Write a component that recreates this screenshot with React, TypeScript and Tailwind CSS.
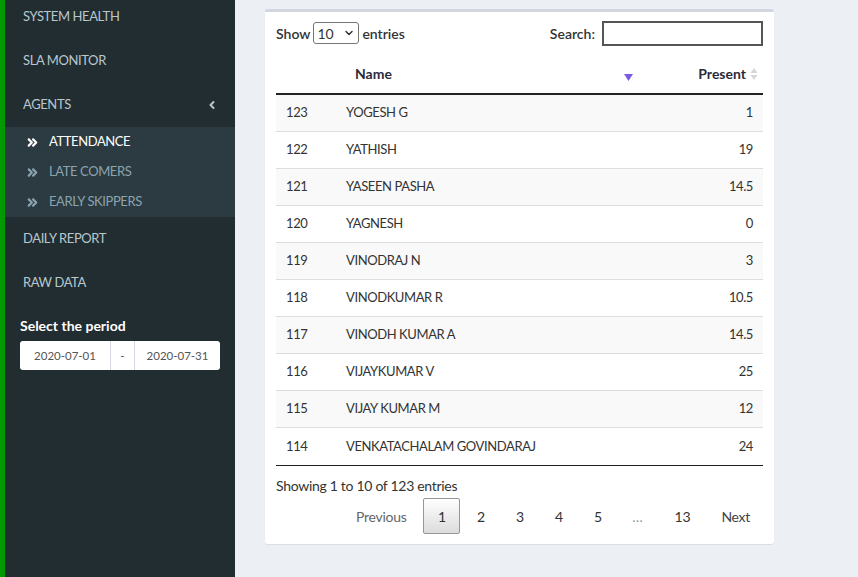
import React from "react";
import { ChevronLeft, ChevronsRight, ChevronDown } from "lucide-react";

const rows = [
  { id: 123, name: "YOGESH G", present: "1" },
  { id: 122, name: "YATHISH", present: "19" },
  { id: 121, name: "YASEEN PASHA", present: "14.5" },
  { id: 120, name: "YAGNESH", present: "0" },
  { id: 119, name: "VINODRAJ N", present: "3" },
  { id: 118, name: "VINODKUMAR R", present: "10.5" },
  { id: 117, name: "VINODH KUMAR A", present: "14.5" },
  { id: 116, name: "VIJAYKUMAR V", present: "25" },
  { id: 115, name: "VIJAY KUMAR M", present: "12" },
  { id: 114, name: "VENKATACHALAM GOVINDARAJ", present: "24" },
];

const MenuItem = ({ label, open }: { label: string; open?: boolean }) => (
  <div className="h-[44px] flex items-center justify-between pl-[18px] pr-[17px] text-[13px] tracking-[-0.4px] text-[#b8c7ce]">
    <span>{label}</span>
    {open && <ChevronLeft size={12} strokeWidth={4} className="text-[#b8c7ce]" />}
  </div>
);

const SubItem = ({ label, active }: { label: string; active?: boolean }) => (
  <div
    className={
      "h-[30px] flex items-center pl-[20px] text-[13px] tracking-[-0.4px] " +
      (active ? "text-white" : "text-[#8aa4af]")
    }
  >
    <ChevronsRight size={15} strokeWidth={3.5} className="mr-[9px]" />
    <span>{label}</span>
  </div>
);

const Sidebar = () => (
  <aside className="w-[235px] shrink-0 flex h-full">
    <div className="w-[5px] bg-[#009900]" />
    <div className="flex-1 bg-[#222d32] overflow-hidden">
      <div className="-mt-[5px]">
        <MenuItem label="SYSTEM HEALTH" />
        <MenuItem label="SLA MONITOR" />
        <MenuItem label="AGENTS" open />
        <div className="bg-[#2c3b41]">
          <SubItem label="ATTENDANCE" active />
          <SubItem label="LATE COMERS" />
          <SubItem label="EARLY SKIPPERS" />
        </div>
        <MenuItem label="DAILY REPORT" />
        <MenuItem label="RAW DATA" />
        <div className="pl-[15px] pr-[15px] pt-[12px]">
          <div className="text-white font-bold text-[14px] leading-[18px]">Select the period</div>
          <div className="mt-[6px] flex h-[29px] w-[200px] bg-white rounded-[3px] text-[11.5px] text-[#555]">
            <div className="w-[90px] flex items-center justify-center">2020-07-01</div>
            <div className="w-[25px] flex items-center justify-center border-x border-[#d6d6e0] bg-white">-</div>
            <div className="flex-1 flex items-center justify-center">2020-07-31</div>
          </div>
        </div>
      </div>
    </div>
  </aside>
);

const SortBoth = () => (
  <svg width="8" height="14" viewBox="0 0 8 14" className="ml-[4px]">
    <path d="M4 1 L7.5 6 L0.5 6 Z" fill="#d6d6d6" />
    <path d="M4 13 L7.5 8 L0.5 8 Z" fill="#d6d6d6" />
  </svg>
);

const PageBtn = ({ label, w, current, muted }: { label: string; w: string; current?: boolean; muted?: boolean }) => (
  <span
    className={
      "h-[36px] mx-[1px] flex items-center justify-center rounded-[2px] " +
      w +
      (current
        ? " border border-[#979797] bg-gradient-to-b from-white to-[#dcdcdc] text-[#333]"
        : muted
        ? " text-[#999]"
        : " text-[#333]")
    }
  >
    {label}
  </span>
);

const Pager = () => (
  <div className="flex items-center justify-end h-[36px] text-[14px] tracking-[-0.3px]">
    <span className="px-[16px] text-[#666]">Previous</span>
    <PageBtn label="1" w="w-[37px]" current />
    <PageBtn label="2" w="w-[37px]" />
    <PageBtn label="3" w="w-[37px]" />
    <PageBtn label="4" w="w-[37px]" />
    <PageBtn label="5" w="w-[37px]" />
    <PageBtn label="…" w="w-[38px]" muted />
    <PageBtn label="13" w="w-[48px]" />
    <span className="pl-[14px] pr-[13px] text-[#444]">Next</span>
  </div>
);

const DataCard = () => (
  <div className="w-[509px] bg-white rounded-[3px] border-t-[3px] border-[#d2d6de] shadow-[0_1px_1px_rgba(0,0,0,0.08)] px-[11px] pt-[8px] pb-[10px] text-[#333]">
    <div className="flex items-center justify-between h-[26px] text-[14px] font-semibold">
      <div className="flex items-center">
        <span>Show</span>
        <div className="mx-[3px] w-[46px] h-[22px] border border-[#767676] rounded-[3px] flex items-center justify-between px-[3px] font-normal">
          <span>10</span>
          <ChevronDown size={12} strokeWidth={3} />
        </div>
        <span>entries</span>
      </div>
      <div className="flex items-center">
        <span className="mr-[7px]">Search:</span>
        <div className="w-[161px] h-[25px] border-2 border-[#555]" />
      </div>
    </div>
    <div className="mt-[8px]">
      <div className="flex items-center h-[41px] border-b-2 border-[#222] text-[14px] font-bold text-[#2b2b3b]">
        <div className="w-[60px]" />
        <div className="flex-1 flex items-center justify-between pl-[19px] pr-[65px]">
          <span>Name</span>
          <svg width="9" height="8" viewBox="0 0 9 8" className="mt-[8px]">
            <path d="M0 0 L9 0 L4.5 7 Z" fill="#7b5ce0" />
          </svg>
        </div>
        <div className="flex items-center pr-[5px]">
          <span>Present</span>
          <SortBoth />
        </div>
      </div>
      {rows.map((r, i) => (
        <div
          key={r.id}
          className={
            "flex items-center h-[37px] text-[13px] tracking-[-0.4px] text-[#333] " +
            (i < rows.length - 1 ? "border-b border-[#ddd] " : "") +
            (i % 2 === 0 ? "bg-[#f9f9f9]" : "bg-white")
          }
        >
          <div className="w-[60px] pl-[10px]">{r.id}</div>
          <div className="flex-1 pl-[10px]">{r.name}</div>
          <div className="pr-[10px] text-right">{r.present}</div>
        </div>
      ))}
      <div className="border-t border-[#222]" />
    </div>
    <div className="mt-[11px] text-[14px] tracking-[-0.3px] text-[#333] leading-[18px]">Showing 1 to 10 of 123 entries</div>
    <div className="mt-[3px]">
      <Pager />
    </div>
  </div>
);

export default function App() {
  return (
    <div
      className="w-[858px] h-[577px] flex bg-[#ecf0f5] overflow-hidden"
      style={{ fontFamily: "Lato, 'Noto Sans', sans-serif" }}
    >
      <Sidebar />
      <main className="flex-1 pl-[30px] pt-[9px]">
        <DataCard />
      </main>
    </div>
  );
}
